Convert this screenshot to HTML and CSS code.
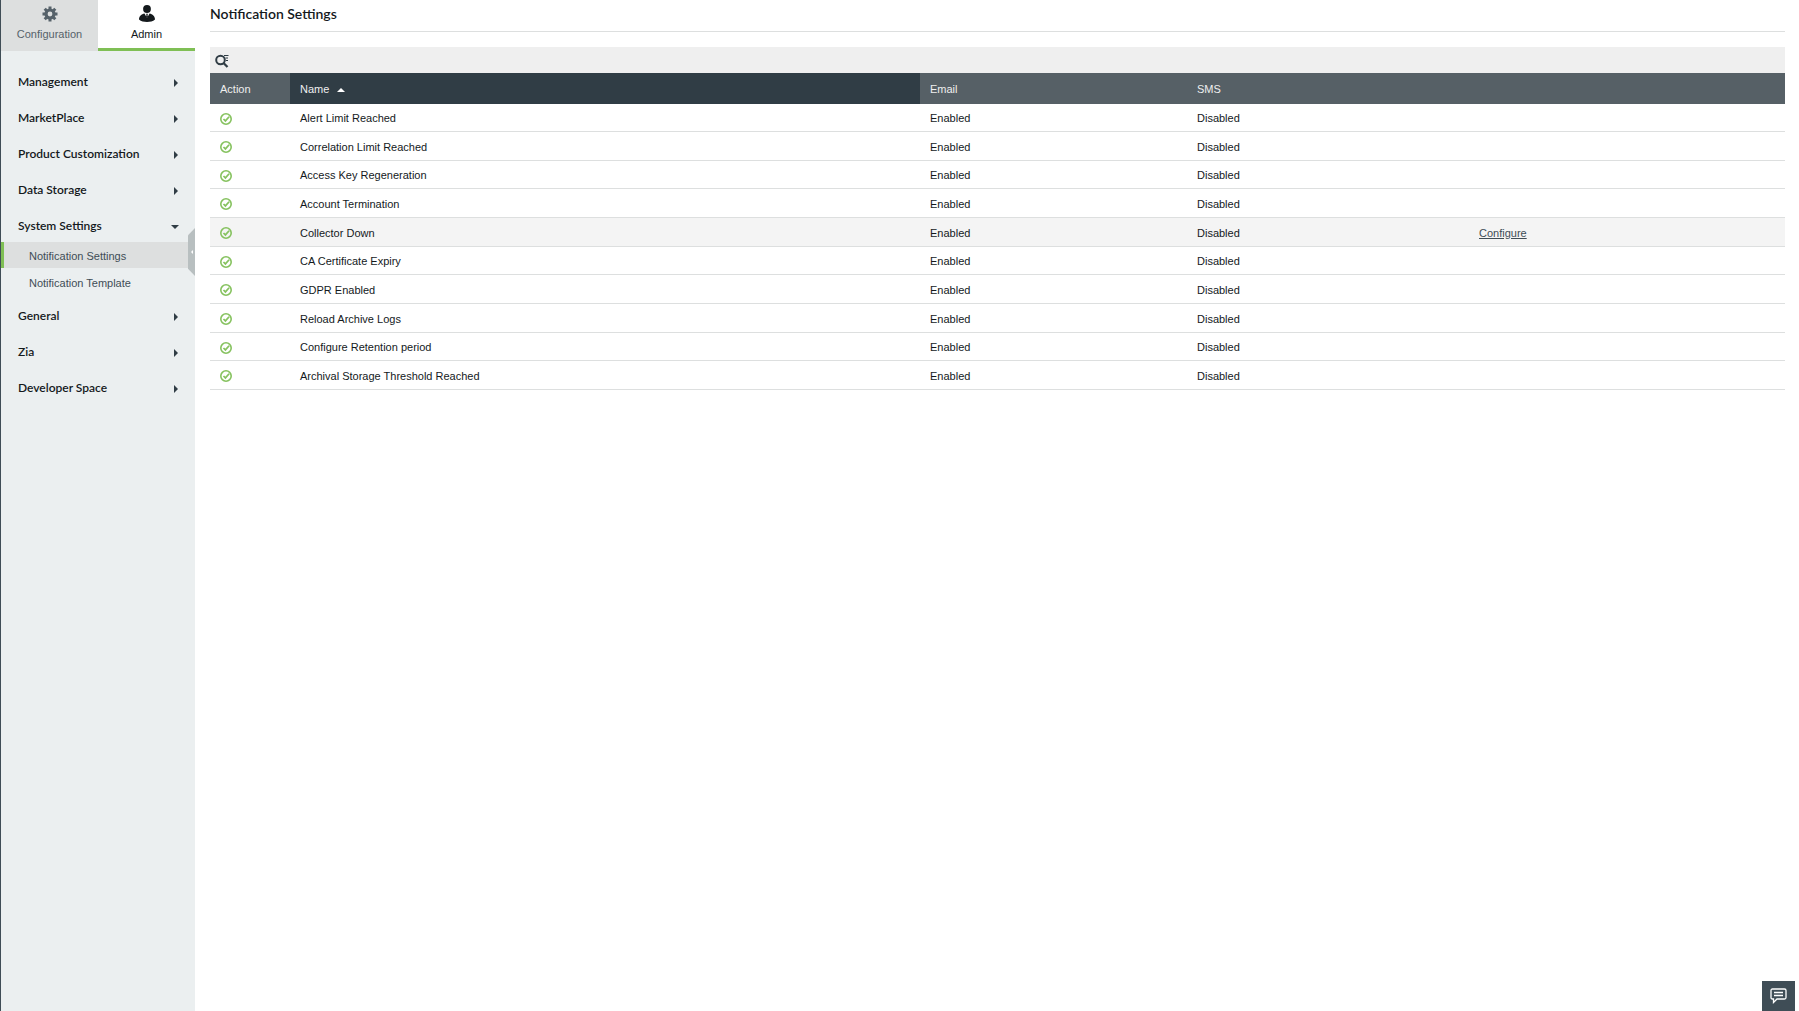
FILE: index.html
```html
<!DOCTYPE html>
<html lang="en">
<head>
  <meta charset="UTF-8">
  <meta name="viewport" content="width=device-width, initial-scale=1.0">
  <title>Notification Settings</title>
  <link rel="stylesheet" href="styles.css">
</head>
<body>
<svg class="defs" aria-hidden="true">
  <symbol id="ok" viewBox="0 0 12 12">
    <circle cx="6" cy="6" r="5.2" fill="none" stroke="#86c25f" stroke-width="1.6"/>
    <path d="M3.5 6l1.9 1.9 3.7-4.2" fill="none" stroke="#86c25f" stroke-width="1.7"/>
  </symbol>
</svg>

<div class="layout">
  <aside class="sidebar">
    <nav class="tabs">
      <a href="#" class="tab">
        <svg width="16" height="16" viewBox="0 0 16 16">
          <g fill="none" stroke="#56626a">
            <circle cx="8" cy="8" r="4" stroke-width="3.2"/>
            <path d="M8 .5v3M8 12.5v3M.5 8h3M12.5 8h3M2.7 2.7l2 2M11.3 11.3l2 2M13.3 2.7l-2 2M4.7 11.3l-2 2" stroke-width="3"/>
          </g>
        </svg>
        Configuration
      </a>
      <a href="#" class="tab active">
        <svg width="16" height="17" viewBox="0 0 16 17">
          <circle cx="8" cy="4" r="3.9" fill="#14191c"/>
          <path d="M0 14.5C0 11 2.500 9 5.500 8.500L8 13l2.500-4.500C13.500 9 16 11 16 14.500 14 16.300 11 17 8 17s-6-.7-8-2.500z" fill="#14191c"/>
          <path d="M7 8.800h2l-.5 1.200.5 2-1 1.500L7 12l.5-2z" fill="#14191c"/>
        </svg>
        Admin
      </a>
    </nav>

    <nav class="menu">
      <button class="menu-item">Management <span class="arrow"></span></button>
      <button class="menu-item">MarketPlace <span class="arrow"></span></button>
      <button class="menu-item">Product Customization <span class="arrow"></span></button>
      <button class="menu-item">Data Storage <span class="arrow"></span></button>
      <button class="menu-item open">System Settings <span class="arrow"></span></button>
      <div class="submenu">
        <a href="#" class="selected">Notification Settings</a>
        <a href="#">Notification Template</a>
      </div>
      <button class="menu-item">General <span class="arrow"></span></button>
      <button class="menu-item">Zia <span class="arrow"></span></button>
      <button class="menu-item">Developer Space <span class="arrow"></span></button>
    </nav>

    <button class="collapse" aria-label="Collapse sidebar"></button>
  </aside>

  <main class="content">
    <h1>Notification Settings</h1>

    <div class="toolbar">
      <button class="search" aria-label="Search">
        <svg width="14" height="14" viewBox="0 0 14 14" fill="none" stroke="#303d45">
          <circle cx="5.500" cy="6" r="4.300" stroke-width="2"/>
          <path d="M8.500 9l4 4" stroke-width="2.300"/>
          <path d="M9 1.500h4.500M10.500 4H13M11 6.500h2" stroke-width="1"/>
        </svg>
      </button>
    </div>

    <table>
      <thead>
        <tr>
          <th class="col-action">Action</th>
          <th class="col-name">Name <span class="sort"></span></th>
          <th class="col-email">Email</th>
          <th class="col-sms">SMS</th>
          <th></th>
        </tr>
      </thead>
      <tbody>
        <tr><td><svg class="ok"><use href="#ok"/></svg></td><td>Alert Limit Reached</td><td>Enabled</td><td>Disabled</td><td></td></tr>
        <tr><td><svg class="ok"><use href="#ok"/></svg></td><td>Correlation Limit Reached</td><td>Enabled</td><td>Disabled</td><td></td></tr>
        <tr><td><svg class="ok"><use href="#ok"/></svg></td><td>Access Key Regeneration</td><td>Enabled</td><td>Disabled</td><td></td></tr>
        <tr><td><svg class="ok"><use href="#ok"/></svg></td><td>Account Termination</td><td>Enabled</td><td>Disabled</td><td></td></tr>
        <tr class="hover"><td><svg class="ok"><use href="#ok"/></svg></td><td>Collector Down</td><td>Enabled</td><td>Disabled</td><td><a href="#">Configure</a></td></tr>
        <tr><td><svg class="ok"><use href="#ok"/></svg></td><td>CA Certificate Expiry</td><td>Enabled</td><td>Disabled</td><td></td></tr>
        <tr><td><svg class="ok"><use href="#ok"/></svg></td><td>GDPR Enabled</td><td>Enabled</td><td>Disabled</td><td></td></tr>
        <tr><td><svg class="ok"><use href="#ok"/></svg></td><td>Reload Archive Logs</td><td>Enabled</td><td>Disabled</td><td></td></tr>
        <tr><td><svg class="ok"><use href="#ok"/></svg></td><td>Configure Retention period</td><td>Enabled</td><td>Disabled</td><td></td></tr>
        <tr><td><svg class="ok"><use href="#ok"/></svg></td><td>Archival Storage Threshold Reached</td><td>Enabled</td><td>Disabled</td><td></td></tr>
      </tbody>
    </table>
  </main>
</div>

<button class="chat" aria-label="Feedback">
  <svg width="17" height="16" viewBox="0 0 17 16" fill="none" stroke="#fff" stroke-width="1.300">
    <path d="M2.500 1h12Q16 1 16 2.500v7q0 1.500-1.500 1.500H7l-3.500 3.500V11h-1Q1 11 1 9.500v-7Q1 1 2.500 1z"/>
    <path d="M4 4.500h9M4 7.500h9"/>
  </svg>
</button>
</body>
</html>
```
FILE: styles.css
```css
* {
  box-sizing: border-box;
}

body {
  margin: 0;
  background: #fff;
  color: #14191c;
  font-family: "Liberation Sans", Arial, sans-serif;
  font-size: 11px;
}

button {
  border: none;
  padding: 0;
  background: none;
  cursor: pointer;
}

.defs {
  display: none;
}

.layout {
  display: flex;
  min-height: 100vh;
}

/* Sidebar */
.sidebar {
  position: relative;
  flex: 0 0 195px;
  border-left: 1px solid #3f4d56;
  background: #ebeff0;
}

.tabs {
  display: flex;
  height: 51px;
}

.tab {
  flex: 1;
  display: flex;
  flex-direction: column;
  align-items: center;
  justify-content: flex-end;
  gap: 4px;
  padding-bottom: 9px;
  background: #dddfdf;
  color: #56626a;
  line-height: 16px;
  text-decoration: none;
}

.tab.active {
  padding-bottom: 6px;
  border-bottom: 3px solid #7fbf55;
  background: #fff;
  color: #14191c;
}

.menu {
  display: flex;
  flex-direction: column;
  padding-top: 11px;
}

.menu-item {
  display: flex;
  align-items: center;
  justify-content: space-between;
  padding: 12px 17px 8px;
  color: #14191c;
  font: 600 12px/16px Lato, sans-serif;
  text-align: left;
}

.arrow {
  margin-top: 2px;
  border: solid transparent;
  border-width: 4px 0 4px 4px;
  border-left-color: #303d45;
}

.open .arrow {
  margin-right: -1px;
  border-color: #303d45 transparent transparent;
  border-width: 4px 4px 0;
}

.submenu {
  display: flex;
  flex-direction: column;
  gap: 1px;
  padding-bottom: 1px;
}

.submenu a {
  padding: 2px 0 0 25px;
  border-left: 3px solid transparent;
  color: #3f4d56;
  line-height: 24px;
  text-decoration: none;
}

.submenu .selected {
  border-left-color: #7fbf55;
  background: #dddfdf;
}

.collapse {
  position: absolute;
  top: 228px;
  right: 0;
  display: flex;
  align-items: center;
  justify-content: center;
  width: 7px;
  height: 48px;
  background: #b8bfc0;
  clip-path: polygon(100% 0, 100% 100%, 0 85%, 0 15%);
}

.collapse::before {
  content: "";
  border: solid transparent;
  border-width: 2px 2px 2px 0;
  border-right-color: #fff;
}

/* Content */
.content {
  flex: 1;
  padding: 0 14px 0 15px;
}

h1 {
  height: 32px;
  margin: 0 0 15px;
  padding-top: 4px;
  border-bottom: 1px solid #dddfdf;
  font: 600 14px/20px Lato, sans-serif;
}

.toolbar {
  display: flex;
  align-items: center;
  height: 26px;
  padding: 2px 5px 0;
  background: #efefef;
}

.search {
  display: flex;
}

table {
  width: 100%;
  table-layout: fixed;
  border-collapse: collapse;
}

th {
  height: 31px;
  padding: 0 10px;
  background: #566066;
  color: #efefef;
  font-weight: normal;
  text-align: left;
}

.col-action {
  width: 80px;
}

.col-name {
  width: 40%;
  background: #303d45;
}

.col-email {
  width: 267px;
}

.col-sms {
  width: 282px;
}

.sort {
  display: inline-block;
  margin-left: 5px;
  vertical-align: 1px;
  border: solid transparent;
  border-width: 0 4px 4px;
  border-bottom-color: #fff;
}

td {
  height: 29px;
  padding: 0 10px;
  box-shadow: inset 0 -1px #dddfdf;
}

tr:first-child td,
tr:nth-child(3n) td {
  height: 28px;
}

.hover {
  background: #f4f4f4;
}

td a {
  color: #3f4d56;
}

.ok {
  display: block;
  width: 12px;
  height: 12px;
  margin-top: 1px;
}

.chat {
  position: fixed;
  right: 4px;
  bottom: 0;
  display: flex;
  align-items: center;
  justify-content: center;
  width: 33px;
  height: 30px;
  background: #3f4d56;
}
```
